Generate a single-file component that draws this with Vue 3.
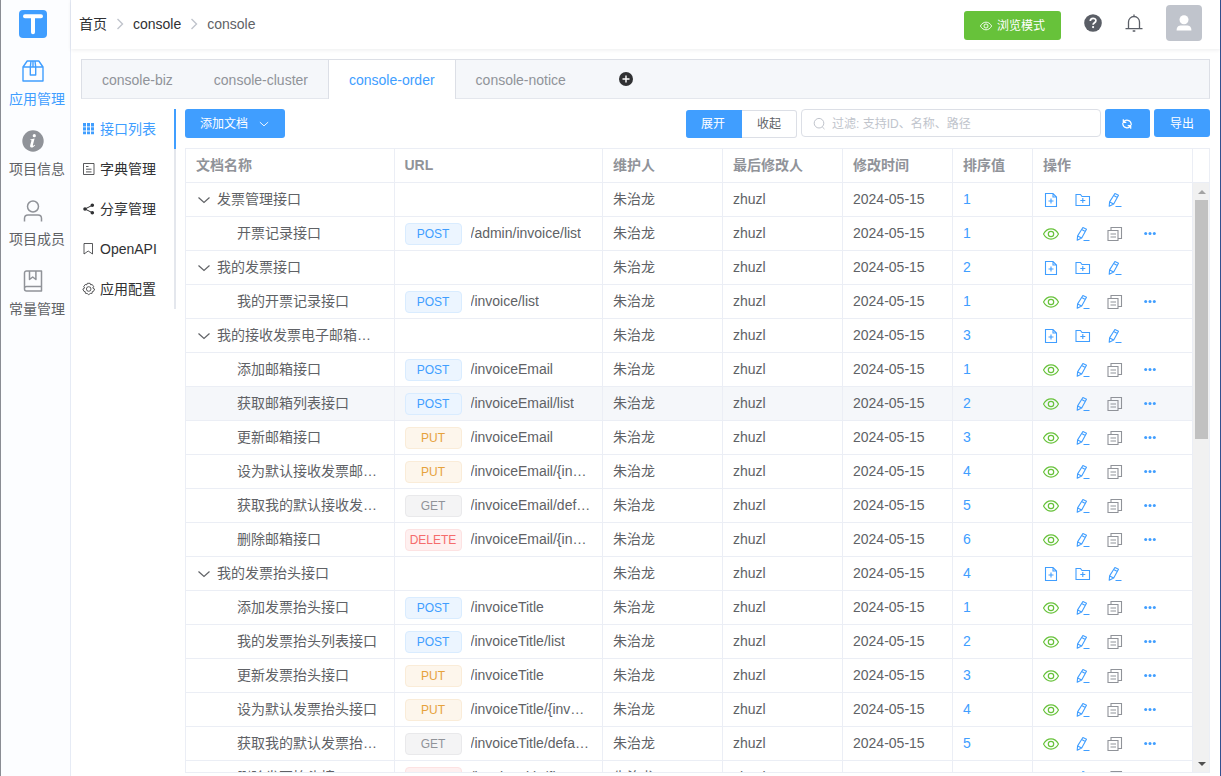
<script setup>
import { ref } from 'vue'

const sideItems = [
  { label: '应用管理', icon: 'i-box', active: true },
  { label: '项目信息', icon: 'i-info' },
  { label: '项目成员', icon: 'i-user' },
  { label: '常量管理', icon: 'i-book' },
]

const tabs = ['console-biz', 'console-cluster', 'console-order', 'console-notice']
const activeTab = ref('console-order')

const subItems = [
  { label: '接口列表', icon: 'i-grid', active: true },
  { label: '字典管理', icon: 'i-doc' },
  { label: '分享管理', icon: 'i-share' },
  { label: 'OpenAPI', icon: 'i-mark' },
  { label: '应用配置', icon: 'i-gear' },
]

const keyword = ref('')

const folder = (name, order) => ({ name, order, folder: true })
const api = (name, method, url, order, hover = false) => ({ name, method, url, order, hover })

const rows = [
  folder('发票管理接口', 1),
  api('开票记录接口', 'POST', '/admin/invoice/list', 1),
  folder('我的发票接口', 2),
  api('我的开票记录接口', 'POST', '/invoice/list', 1),
  folder('我的接收发票电子邮箱…', 3),
  api('添加邮箱接口', 'POST', '/invoiceEmail', 1),
  api('获取邮箱列表接口', 'POST', '/invoiceEmail/list', 2, true),
  api('更新邮箱接口', 'PUT', '/invoiceEmail', 3),
  api('设为默认接收发票邮…', 'PUT', '/invoiceEmail/{in…', 4),
  api('获取我的默认接收发…', 'GET', '/invoiceEmail/def…', 5),
  api('删除邮箱接口', 'DELETE', '/invoiceEmail/{in…', 6),
  folder('我的发票抬头接口', 4),
  api('添加发票抬头接口', 'POST', '/invoiceTitle', 1),
  api('我的发票抬头列表接口', 'POST', '/invoiceTitle/list', 2),
  api('更新发票抬头接口', 'PUT', '/invoiceTitle', 3),
  api('设为默认发票抬头接口', 'PUT', '/invoiceTitle/{inv…', 4),
  api('获取我的默认发票抬…', 'GET', '/invoiceTitle/defa…', 5),
  api('删除发票抬头接口', 'DELETE', '/invoiceTitle/{inv…', 6),
]
</script>

<template>
  <svg class="sprite" aria-hidden="true">
    <symbol id="i-box" viewBox="0 0 22 22">
      <path d="M1 7 5.200 1h11.600L21 7v14H1zM1 7h20M9 1 8.300 7v8h5.400V7L13 1M11 1v6" fill="none" stroke="currentColor" stroke-width="1.400" stroke-linejoin="round" />
    </symbol>
    <symbol id="i-info" viewBox="0 0 22 22">
      <circle cx="11" cy="11" r="10.700" fill="currentColor" />
      <circle cx="12.300" cy="5.700" r="1.600" fill="#fff" />
      <path d="M8.300 9.600c1.200-.7 2.600-1.100 4.300-1.200l-1.700 6.600c-.2 1 .4.900 1.900-.3l.4.500c-1.500 1.700-2.700 2.400-3.800 2.300-1.200-.1-1.500-1-1.200-2.200l1.200-4.600c.1-.6-.1-.8-1.100-.6z" fill="#fff" />
    </symbol>
    <symbol id="i-user" viewBox="0 0 22 22">
      <path d="M11 1a5.500 5.500 0 1 1 0 11 5.500 5.500 0 0 1 0-11zM2.500 21.500v-3c0-2 1.500-3.500 3.500-3.500h10c2 0 3.500 1.500 3.500 3.500v3" fill="none" stroke="currentColor" stroke-width="1.500" />
    </symbol>
    <symbol id="i-book" viewBox="0 0 22 22">
      <path d="M4.500 1h15v20h-15A2 2 0 0 1 2.500 19V3a2 2 0 0 1 2-2zM2.500 18.500a2 2 0 0 1 2-2h15M7.500 1v8.500l3.200-2.500 3.200 2.500V1" fill="none" stroke="currentColor" stroke-width="1.500" stroke-linejoin="round" />
    </symbol>
    <symbol id="i-grid" viewBox="0 0 16 16">
      <path d="M2 2h3v3.400H2zM6 2h3v3.400H6zM10 2h3v3.400h-3zM2 6.200h3v3.400H2zM6 6.200h3v3.400H6zM10 6.200h3v3.400h-3zM2 10.400h3v2.800H2zM6 10.400h3v2.800H6zM10 10.400h3v2.800h-3z" fill="currentColor" />
    </symbol>
    <symbol id="i-doc" viewBox="0 0 16 16">
      <path d="M2.500 2.500h10.500v11H2.500zM5 5.500h2.500M5 8.200h5.500M5 10.900h5.500" fill="none" stroke="currentColor" stroke-width=".8" />
    </symbol>
    <symbol id="i-share" viewBox="0 0 16 16">
      <path d="M11.500 4.200 4 8l7.500 3.800" fill="none" stroke="currentColor" />
      <path d="M11.300 2.400a1.800 1.800 0 1 1 0 3.600 1.800 1.800 0 0 1 0-3.600zM4 6.200a1.800 1.800 0 1 1 0 3.600 1.800 1.800 0 0 1 0-3.600zM11.300 10a1.800 1.800 0 1 1 0 3.600 1.800 1.800 0 0 1 0-3.600z" fill="currentColor" />
    </symbol>
    <symbol id="i-mark" viewBox="0 0 16 16">
      <path d="M3 2.500h8.500V13L7.200 10 3 13z" fill="none" stroke="currentColor" stroke-width=".8" />
    </symbol>
    <symbol id="i-gear" viewBox="0 0 16 16">
      <path d="M6.300 2.300h2.800l.5 1.500 1.600-.3 1.500 2.200-1 1.300 1.900 1-1 2.300-1.300.3-.2 1.700-1.800.2-1.600 1.200-1.500-1.200-1.800-.2-.2-1.700-1.300-.3L1.800 8l1.900-1-1-1.300 1.500-2.200 1.600.3z" fill="none" stroke="currentColor" stroke-width=".8" stroke-linejoin="round" />
      <circle cx="7.700" cy="8" r="2.300" fill="none" stroke="currentColor" stroke-width=".8" />
    </symbol>
    <symbol id="i-right" viewBox="0 0 14 14">
      <path d="M4.500 2 9.500 7l-5 5" fill="none" stroke="currentColor" stroke-width="1.400" />
    </symbol>
    <symbol id="i-down" viewBox="0 0 16 16">
      <path d="m2.500 5.500 5.500 5 5.500-5" fill="none" stroke="currentColor" stroke-width="1.200" />
    </symbol>
    <symbol id="i-eye" viewBox="0 0 16 16">
      <path d="M.5 8C4.200 1.200 11.800 1.200 15.500 8 11.800 14.800 4.200 14.800.5 8z" fill="none" stroke="currentColor" stroke-width="1.200" />
      <circle cx="8" cy="8" r="2.700" fill="none" stroke="currentColor" stroke-width="1.200" />
    </symbol>
    <symbol id="i-pen" viewBox="0 0 16 16">
      <path d="M7.900 1.500 11.500 3.300 6.700 12 2.200 14.300 2.600 9.900zM6.700 3.600l3.600 2M2.700 9.900l3.900 2.100M8.500 14.500H14.500" fill="none" stroke="currentColor" stroke-width="1.100" stroke-linejoin="round" />
    </symbol>
    <symbol id="i-file" viewBox="0 0 16 16">
      <path d="M2.500 1.500h7.500l3.500 3.500v9.500h-11zM10 1.500V5h3.500M8 6.500v5M5.500 9h5" fill="none" stroke="currentColor" stroke-width="1.100" />
    </symbol>
    <symbol id="i-folder" viewBox="0 0 16 16">
      <path d="M1 2.500h4.500l1.500 2h7.500v9H1zM7.800 6v5M5.300 8.500h5" fill="none" stroke="currentColor" stroke-width="1.100" />
    </symbol>
    <symbol id="i-copy" viewBox="0 0 16 16">
      <path d="M1 4.500h10v10H1zM4 4.500v-3h10.500v11H11M3.500 8h5.500M3.500 11h5.500" fill="none" stroke="currentColor" stroke-width="1.100" />
    </symbol>
    <symbol id="i-more" viewBox="0 0 16 16">
      <circle cx="3.700" cy="7.500" r="1.500" fill="currentColor" />
      <circle cx="8" cy="7.500" r="1.500" fill="currentColor" />
      <circle cx="12.300" cy="7.500" r="1.500" fill="currentColor" />
    </symbol>
    <symbol id="i-help" viewBox="0 0 18 18">
      <circle cx="9" cy="9" r="8.800" fill="currentColor" />
      <path d="M6.300 7c0-3.600 5.600-3.500 5.600-.2 0 2-2.800 2-2.800 4" fill="none" stroke="#fff" stroke-width="1.700" />
      <circle cx="9.100" cy="13.100" r="1.100" fill="#fff" />
    </symbol>
    <symbol id="i-bell" viewBox="0 0 18 18">
      <path d="M3.500 14.500V8a5.500 5.500 0 0 1 11 0v6.500M.5 14.700h17M9 .5v2M7.700 17h2.600" fill="none" stroke="currentColor" stroke-width="1.300" />
    </symbol>
    <symbol id="i-avatar" viewBox="0 0 16 16">
      <circle cx="8" cy="4.800" r="4.500" fill="currentColor" />
      <path d="M.6 15.500c0-4 2-5 4.700-5h5.400c2.700 0 4.700 1 4.700 5z" fill="currentColor" />
    </symbol>
    <symbol id="i-plus" viewBox="0 0 14 14">
      <circle cx="7" cy="7" r="7" fill="currentColor" />
      <path d="M7 3.500v7M3.500 7h7" stroke="#fff" stroke-width="1.400" />
    </symbol>
    <symbol id="i-search" viewBox="0 0 14 14">
      <circle cx="7" cy="6.200" r="4.800" fill="none" stroke="currentColor" />
      <path d="m10.200 9.800 2.300 2.300" stroke="currentColor" />
    </symbol>
    <symbol id="i-refresh" viewBox="0 0 12 12">
      <path d="M2.300 1.300v3h3M2.500 4.100A4.200 4.200 0 0 1 10.200 6v1M9.700 10.700v-3h-3M9.500 7.900A4.200 4.200 0 0 1 1.800 6V5" fill="none" stroke="currentColor" stroke-width="1.200" />
    </symbol>
  </svg>

  <div class="shell">
    <nav class="side">
      <a class="logo" href="#" aria-label="首页">
        <svg viewBox="0 0 28 28">
          <rect width="28" height="28" rx="4" fill="#409eff" />
          <path d="M6 6.200h16M14 6.200v16" stroke="#fff" stroke-width="4" stroke-linecap="round" />
        </svg>
      </a>
      <a v-for="s in sideItems" :key="s.label" href="#" class="side-item" :class="{ active: s.active }">
        <svg><use :href="'#' + s.icon" /></svg>
        <span>{{ s.label }}</span>
      </a>
    </nav>

    <div class="page">
      <header class="top">
        <nav class="crumbs">
          <a href="#">首页</a>
          <svg><use href="#i-right" /></svg>
          <a href="#">console</a>
          <svg><use href="#i-right" /></svg>
          <span>console</span>
        </nav>
        <div class="top-actions">
          <button class="btn success"><svg><use href="#i-eye" /></svg>浏览模式</button>
          <button class="plain help" aria-label="帮助"><svg><use href="#i-help" /></svg></button>
          <button class="plain bell" aria-label="通知"><svg><use href="#i-bell" /></svg></button>
          <button class="plain avatar" aria-label="用户"><svg><use href="#i-avatar" /></svg></button>
        </div>
      </header>

      <main class="main">
        <div class="tabs" role="tablist">
          <button
            v-for="t in tabs"
            :key="t"
            role="tab"
            class="tab"
            :class="{ active: t === activeTab }"
            :aria-selected="t === activeTab"
            @click="activeTab = t"
          >{{ t }}</button>
          <button class="plain add" aria-label="添加应用"><svg><use href="#i-plus" /></svg></button>
        </div>

        <div class="body">
          <nav class="sub">
            <a v-for="s in subItems" :key="s.label" href="#" class="sub-item" :class="{ active: s.active }">
              <svg><use :href="'#' + s.icon" /></svg>
              <span>{{ s.label }}</span>
            </a>
          </nav>

          <section class="content">
            <div class="toolbar">
              <button class="btn primary create">添加文档<svg><use href="#i-down" /></svg></button>
              <div class="segment">
                <button class="on">展开</button>
                <button>收起</button>
              </div>
              <label class="search">
                <svg><use href="#i-search" /></svg>
                <input v-model="keyword" type="text" placeholder="过滤: 支持ID、名称、路径" aria-label="过滤" />
              </label>
              <button class="btn primary refresh" aria-label="刷新"><svg><use href="#i-refresh" /></svg></button>
              <button class="btn primary export">导出</button>
            </div>

            <div class="grid">
              <table class="head">
                <colgroup>
                  <col /><col /><col class="w120" /><col class="w120" /><col class="w110" /><col class="w80" /><col class="w160" /><col class="w16" />
                </colgroup>
                <thead>
                  <tr>
                    <th>文档名称</th>
                    <th>URL</th>
                    <th>维护人</th>
                    <th>最后修改人</th>
                    <th>修改时间</th>
                    <th>排序值</th>
                    <th>操作</th>
                    <th class="gutter"></th>
                  </tr>
                </thead>
              </table>
              <div class="scroll">
                <div class="view">
                  <table>
                    <colgroup>
                      <col /><col /><col class="w120" /><col class="w120" /><col class="w110" /><col class="w80" /><col class="w160" />
                    </colgroup>
                    <tbody>
                      <tr v-for="(r, i) in rows" :key="i" :class="{ hover: r.hover }">
                        <td>
                          <div class="name" :class="{ child: !r.folder }">
                            <button v-if="r.folder" class="plain toggle" aria-label="收起"><svg><use href="#i-down" /></svg></button>
                            <span class="clip">{{ r.name }}</span>
                          </div>
                        </td>
                        <td>
                          <div v-if="r.method" class="url">
                            <span class="tag" :class="r.method.toLowerCase()">{{ r.method }}</span>
                            <span class="clip">{{ r.url }}</span>
                          </div>
                        </td>
                        <td>朱治龙</td>
                        <td>zhuzl</td>
                        <td>2024-05-15</td>
                        <td><a href="#" class="order">{{ r.order }}</a></td>
                        <td>
                          <div v-if="r.folder" class="ops">
                            <button class="plain" aria-label="新建文档"><svg><use href="#i-file" /></svg></button>
                            <button class="plain" aria-label="新建目录"><svg><use href="#i-folder" /></svg></button>
                            <button class="plain" aria-label="编辑"><svg><use href="#i-pen" /></svg></button>
                          </div>
                          <div v-else class="ops">
                            <button class="plain view-op" aria-label="预览"><svg><use href="#i-eye" /></svg></button>
                            <button class="plain" aria-label="编辑"><svg><use href="#i-pen" /></svg></button>
                            <button class="plain copy-op" aria-label="复制"><svg><use href="#i-copy" /></svg></button>
                            <button class="plain more-op" aria-label="更多"><svg><use href="#i-more" /></svg></button>
                          </div>
                        </td>
                      </tr>
                    </tbody>
                  </table>
                </div>
                <div class="bar" aria-hidden="true">
                  <svg viewBox="0 0 17 17"><path d="m5 11 4-4 4 4z" fill="#a3a3a3" /></svg>
                  <div class="track"><div class="thumb"></div></div>
                  <svg viewBox="0 0 17 17"><path d="m5 7 4 4 4-4z" fill="#505050" /></svg>
                </div>
              </div>
            </div>
          </section>
        </div>
      </main>
    </div>
  </div>
</template>

<style>
body {
  margin: 0;
}
</style>

<style scoped>
.sprite {
  position: absolute;
  width: 0;
  height: 0;
}
.shell {
  box-sizing: border-box;
  display: flex;
  height: 100vh;
  border-left: 1px solid #8a8d94;
  border-right: 1px solid #33508f;
  background: #fff;
  color: #606266;
  font: 14px/20px "Liberation Sans", "Noto Sans CJK SC", sans-serif;
}
.shell *,
.shell *::before {
  box-sizing: border-box;
}
a {
  color: inherit;
  text-decoration: none;
}
button {
  font: inherit;
  cursor: pointer;
}
svg {
  display: block;
  flex: none;
}
.plain {
  display: block;
  padding: 0;
  border: 0;
  background: none;
  color: inherit;
}

.side {
  flex: none;
  width: 70px;
  padding: 10px 4px 0 8px;
  border-right: 1px solid #e6ebf5;
  background: #fcfdff;
}
.logo {
  display: block;
  margin: 0 0 22px 10px;
}
.logo svg {
  width: 28px;
  height: 28px;
}
.side-item {
  display: block;
  height: 70px;
  white-space: nowrap;
}
.side-item svg {
  width: 22px;
  height: 22px;
  margin: 0 0 7px 13px;
  color: #909399;
}
.side-item.active,
.side-item.active svg {
  color: #409eff;
}

.page {
  flex: 1;
  min-width: 0;
  display: flex;
  flex-direction: column;
}
.top {
  flex: none;
  display: flex;
  justify-content: space-between;
  height: 49px;
  padding: 0 18px 2px 8px;
  box-shadow: 0 1px 4px rgba(0, 21, 41, 0.08);
}
.crumbs {
  display: flex;
  align-items: center;
  gap: 6px;
  color: #606266;
}
.crumbs a {
  color: #303133;
}
.crumbs svg {
  width: 14px;
  height: 14px;
  color: #c0c4cc;
}
.top-actions {
  display: flex;
  align-items: center;
  height: 46px;
  gap: 23px;
}
.help svg,
.bell svg {
  width: 18px;
  height: 18px;
  color: #5a5e66;
}
.avatar {
  display: flex;
  align-items: center;
  justify-content: center;
  width: 36px;
  height: 36px;
  border-radius: 4px;
  background: #c0c4cc;
  color: #fff;
}
.avatar svg {
  width: 16px;
  height: 16px;
}
.btn {
  display: flex;
  align-items: center;
  justify-content: center;
  height: 29px;
  padding: 1px 16px 0;
  border: 0;
  border-radius: 3px;
  color: #fff;
  font-size: 12px;
  line-height: 14px;
  white-space: nowrap;
}
.primary {
  background: #409eff;
}
.success {
  gap: 5px;
  margin-top: 5px;
  background: #67c23a;
}
.success svg,
.refresh svg {
  width: 12px;
  height: 12px;
}

.main {
  flex: 1;
  min-height: 0;
  display: flex;
  flex-direction: column;
  gap: 10px;
  padding: 10px 10px 3px;
}
.tabs {
  flex: none;
  display: flex;
  height: 40px;
  border: 1px solid #dcdfe6;
  border-bottom-color: #e4e7ed;
  background: #f5f7fa;
}
.tab {
  height: 39px;
  margin-left: -1px;
  padding: 0 20px;
  border: 1px solid transparent;
  border-width: 0 1px;
  background: none;
  color: #909399;
}
.tab.active {
  border-color: #dcdfe6;
  background: #fff;
  color: #409eff;
}
.add {
  margin-left: 32px;
  color: #303133;
}
.add svg {
  width: 14px;
  height: 14px;
}

.body {
  flex: 1;
  min-height: 0;
  display: flex;
  gap: 9px;
}
.sub {
  flex: none;
  width: 95px;
}
.sub-item {
  display: flex;
  align-items: center;
  gap: 3px;
  height: 40px;
  border-right: 2px solid #e4e7ed;
  color: #303133;
  white-space: nowrap;
}
.sub-item svg {
  width: 16px;
  height: 16px;
}
.sub-item.active {
  border-color: #409eff;
  color: #409eff;
}

.content {
  flex: 1;
  min-width: 0;
  display: flex;
  flex-direction: column;
  gap: 10px;
}
.toolbar {
  flex: none;
  display: flex;
  gap: 4px;
}
.create {
  gap: 10px;
  margin-right: auto;
  padding: 0 15px;
}
.create svg {
  width: 12px;
  height: 12px;
}
.segment {
  display: flex;
  align-self: flex-end;
}
.segment button {
  height: 28px;
  padding: 0 15px;
  border: 1px solid #dcdfe6;
  border-left: 0;
  border-radius: 0 3px 3px 0;
  background: #fff;
  color: #606266;
  font-size: 12px;
  line-height: 14px;
}
.segment .on {
  padding: 0 16px 0 15px;
  border-color: #409eff;
  border-radius: 3px 0 0 3px;
  background: #409eff;
  color: #fff;
}
.search {
  display: flex;
  align-items: center;
  gap: 6px;
  width: 300px;
  height: 28px;
  padding: 1px 10px 0;
  border: 1px solid #dcdfe6;
  border-radius: 4px;
}
.search svg {
  width: 14px;
  height: 14px;
  color: #c0c4cc;
}
.search input {
  flex: 1;
  min-width: 0;
  padding: 0;
  border: 0;
  outline: 0;
  background: none;
  color: #606266;
  font: inherit;
  font-size: 12px;
}
.search input::placeholder {
  color: #c0c4cc;
}
.refresh {
  width: 45px;
}
.export {
  height: 28px;
  padding-top: 2px;
}

.grid {
  flex: 1;
  min-height: 0;
  display: flex;
  flex-direction: column;
  border: 1px solid #ebeef5;
}
table {
  width: 100%;
  table-layout: fixed;
  border-collapse: separate;
  border-spacing: 0;
}
.head {
  flex: none;
}
.w120 {
  width: 120px;
}
.w110 {
  width: 110px;
}
.w80 {
  width: 80px;
}
.w160 {
  width: 160px;
}
.w16 {
  width: 16px;
}
th,
td {
  height: 34px;
  padding: 0 10px 2px;
  border-right: 1px solid #ebeef5;
  border-bottom: 1px solid #ebeef5;
  text-align: left;
  white-space: nowrap;
}
th {
  color: #909399;
  font-weight: 700;
}
th.gutter {
  padding: 0;
  border-right: 0;
}
.hover td {
  background: #f5f7fa;
}
.scroll {
  flex: 1;
  min-height: 0;
  display: flex;
}
.view {
  flex: 1;
  min-width: 0;
  overflow: hidden;
}
.name {
  display: flex;
  align-items: center;
  gap: 5px;
}
.name.child {
  padding-left: 41px;
}
.toggle {
  padding-top: 2px;
}
.toggle svg {
  width: 16px;
  height: 16px;
}
.clip {
  overflow: hidden;
  text-overflow: ellipsis;
}
.url {
  display: flex;
  align-items: flex-start;
  gap: 9px;
  padding-top: 2px;
}
.tag {
  flex: none;
  width: 57px;
  height: 22px;
  border: 1px solid;
  border-radius: 4px;
  font-size: 12px;
  line-height: 20px;
  text-align: center;
}
.post {
  border-color: #d9ecff;
  background: #ecf5ff;
  color: #409eff;
}
.put {
  border-color: #faecd8;
  background: #fdf6ec;
  color: #e6a23c;
}
.get {
  border-color: #e9e9eb;
  background: #f4f4f5;
  color: #909399;
}
.delete {
  border-color: #fde2e2;
  background: #fef0f0;
  color: #f56c6c;
}
.order {
  color: #409eff;
}
.ops {
  display: flex;
  gap: 16px;
  padding-top: 2px;
  color: #409eff;
}
.ops svg {
  width: 16px;
  height: 16px;
}
.view-op {
  color: #67c23a;
}
.copy-op {
  color: #909399;
}
.more-op {
  padding-left: 3px;
}
.bar {
  flex: none;
  display: flex;
  flex-direction: column;
  width: 16px;
  background: #f1f1f1;
}
.bar svg {
  width: 17px;
  height: 17px;
}
.track {
  flex: 1;
  padding: 0 1px 0 2px;
}
.thumb {
  height: 43%;
  background: #c1c1c1;
}
</style>
